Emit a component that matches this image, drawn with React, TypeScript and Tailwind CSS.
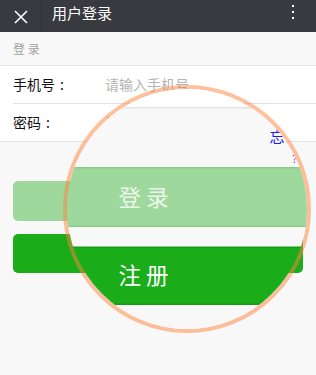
import React from "react";

// the login page itself, drawn twice: once as is, once inside the magnifier
const LoginPage: React.FC<{ zoomed?: boolean }> = ({ zoomed = false }) => {
  return (
    <div className="flex h-[375px] w-[316px] flex-col bg-[#f8f8f8] font-['Noto_Sans_CJK_SC',sans-serif]">
      {/* header */}
      <div className="flex h-[32px] shrink-0 items-center bg-[#393a3f] text-white">
        <div className="flex h-full w-[42px] items-center justify-center border-r border-[#303135]">
          <svg width="14" height="14" viewBox="0 0 14 14" className="mt-[2px]">
            <path d="M1 1L13 13M13 1L1 13" stroke="#fff" strokeWidth="1.6" />
          </svg>
        </div>
        <p className="ml-[10px] -mt-[6px] text-[15px] leading-[20px]">用户登录</p>
        <div className="ml-auto mr-[22px] -mt-[8px] flex flex-col gap-[3.5px]">
          <span className="block h-[2.5px] w-[2.5px] bg-white" />
          <span className="block h-[2.5px] w-[2.5px] bg-white" />
          <span className="block h-[2.5px] w-[2.5px] bg-white" />
        </div>
      </div>

      {/* section title */}
      <div className="flex h-[34px] shrink-0 items-center border-b border-[#e5e5e5] pl-[13px]">
        <p className="text-[12px] leading-[12px] text-[#a3a3a3]">登 录</p>
      </div>

      {/* form */}
      <div className="shrink-0 border-b border-[#e2e2e2] bg-white">
        <div className="flex h-[37px] items-center pl-[13px]">
          <label className="w-[92px] text-[14px] text-[#111]">
            手机号<span className="inline-block w-[14px] text-center">:</span>
          </label>
          <input
            type="text"
            placeholder="请输入手机号"
            className="flex-1 bg-transparent text-[14px] outline-none placeholder:text-[#b4b4b4]"
          />
        </div>
        <div className="ml-[13px] flex h-[38px] items-center border-t border-[#e2e2e2]">
          <label className="w-[92px] text-[14px] text-[#111]">
            密码<span className="inline-block w-[14px] text-center">:</span>
          </label>
          <input
            type="password"
            placeholder="请输入密码"
            className="flex-1 bg-transparent text-[14px] outline-none placeholder:text-[#b4b4b4]"
          />
        </div>
      </div>

      {/* forgot link, sits under the lens */}
      <div className="flex h-[39px] shrink-0 flex-col">
        <span className="ml-[242px] mt-[14px] text-[10px] leading-[10px] text-[#1a1aff]">忘</span>
        <span className="ml-[257px] mt-[6px] text-[7px] leading-[7px] text-[#7b3ccf]">?</span>
      </div>

      {/* buttons */}
      <div className="flex flex-col gap-[13px] px-[13px]">
        <button
          className={`flex h-[40px] items-center justify-center rounded-[5px] bg-[#9fd89c] text-[15px] text-[rgba(255,255,255,0.8)] ${
            zoomed ? "border border-[#8ccb88]" : ""
          }`}
        >
          登&nbsp;录
        </button>
        <button
          className={`flex h-[39px] items-center justify-center rounded-[5px] bg-[#1aad19] text-[15px] text-white ${
            zoomed ? "border border-[#179b16]" : ""
          }`}
        >
          注&nbsp;册
        </button>
      </div>
    </div>
  );
};

const App: React.FC = () => {
  return (
    <div className="relative h-[375px] w-[316px] overflow-hidden">
      <LoginPage />

      {/* magnifier lens */}
      <div className="absolute left-[63px] top-[85px] h-[248px] w-[248px] overflow-hidden rounded-full border-4 border-[rgba(255,130,60,0.5)]">
        <div className="absolute left-[-67px] top-[-89px] origin-[187px_209px] scale-150">
          <LoginPage zoomed />
        </div>
      </div>
    </div>
  );
};

export default App;
